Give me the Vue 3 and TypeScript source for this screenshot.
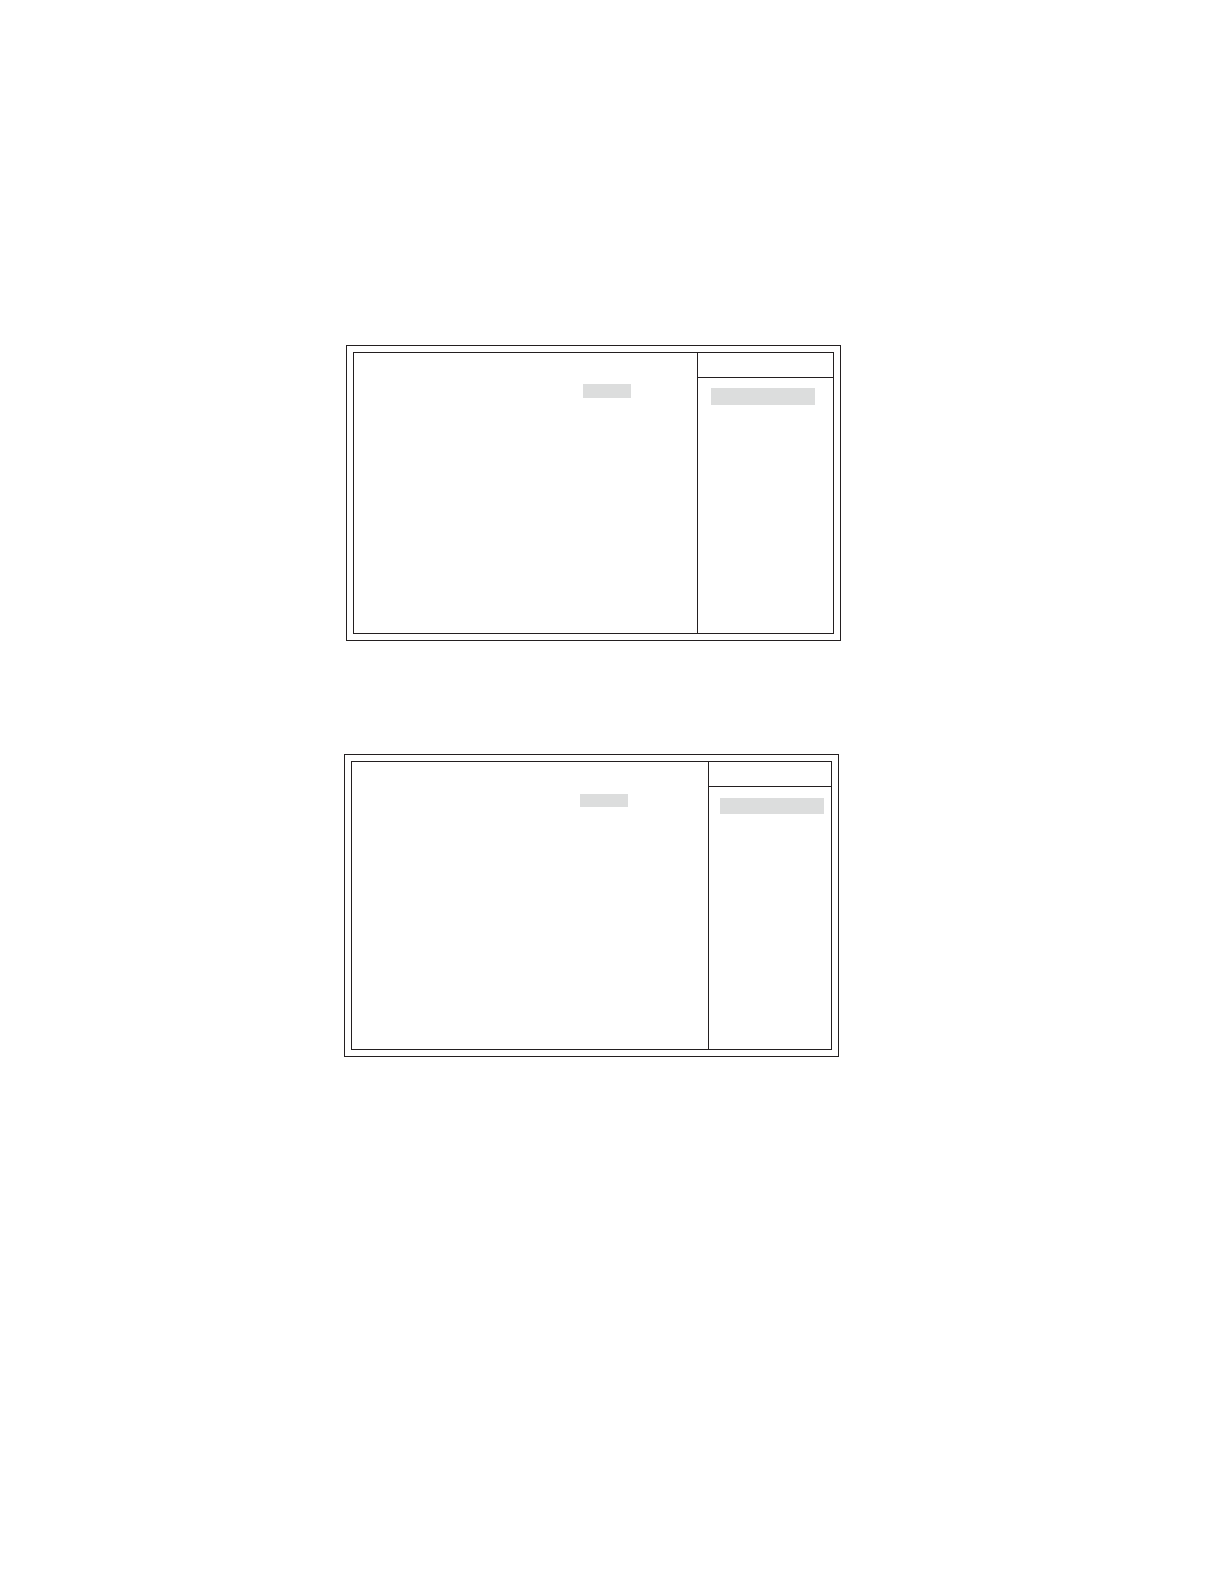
<script setup lang="ts">
interface Screen {
  id: string
}

// Two blank setup screens, each with a main area and a help column
const screens: Screen[] = [{ id: 'first' }, { id: 'second' }]
</script>

<template>
  <main class="page">
    <section v-for="screen in screens" :key="screen.id" class="row" :class="screen.id">
      <div class="frame">
        <div class="panel">
          <div class="content">
            <div class="value"></div>
          </div>
          <aside class="side">
            <header class="side-head"></header>
            <div class="side-body">
              <div class="highlight"></div>
            </div>
          </aside>
        </div>
      </div>
    </section>
  </main>
</template>

<style>
body {
  background: #fff;
}
</style>

<style scoped>
.page {
  box-sizing: border-box;
  min-height: 100vh;
  padding-top: 345px;
  display: flex;
  flex-direction: column;
  gap: 113px;
}

.row {
  display: grid;
}

.first {
  grid-template-columns: 346fr 495fr 383fr;
}

.second {
  grid-template-columns: 344fr 495fr 385fr;
}

.frame {
  grid-column: 2;
  padding: 6px;
  border: 1px solid #231f20;
}

.panel {
  display: grid;
  border: 1px solid #231f20;
}

.first .panel {
  grid-template-columns: 343fr 136fr;
  min-height: 280px;
}

.second .panel {
  grid-template-columns: 356fr 123fr;
  min-height: 287px;
}

.value,
.highlight {
  background: #dcdddd;
}

.value {
  width: 48px;
  height: 14px;
}

.highlight {
  width: 104px;
  height: 17px;
}

.second .value {
  height: 13px;
}

.second .highlight {
  height: 16px;
}

.content {
  display: flex;
  justify-content: flex-end;
  padding: 31px 66px 0 0;
}

.second .content {
  padding: 32px 80px 0 0;
}

.side {
  border-left: 1px solid #231f20;
}

.side-head {
  height: 24px;
  border-bottom: 1px solid #231f20;
}

.side-body {
  padding: 10px 0 0 13px;
}

.second .side-body {
  padding: 11px 0 0 11px;
}
</style>
